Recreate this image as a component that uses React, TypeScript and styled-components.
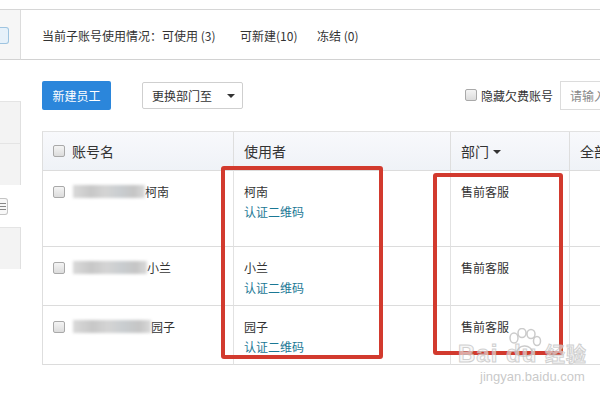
import React from "react";
import styled, { createGlobalStyle } from "styled-components";

const Global = createGlobalStyle`
  html, body { margin: 0; padding: 0; background: #fff; overflow: hidden; }
  body { font-family: "Noto Sans CJK SC", "Noto Sans", sans-serif; color: #333; font-size: 12px; }
`;

const Page = styled.div`
  width: 600px;
  height: 400px;
  padding-top: 9px;
  box-sizing: border-box;
  position: relative;
  overflow: hidden;
`;

const Frame = styled.div`
  display: grid;
  grid-template-columns: 21px minmax(0, 1fr);
  grid-template-rows: 50px auto;
  border-top: 1px solid #d6d6d6;
`;

const SideTop = styled.div`
  background: #f6f6f6;
  border-right: 1px solid #dcdcdc;
  border-bottom: 1px solid #d2d2d2;
  display: flex;
  align-items: center;
  padding-top: 1px;
`;

const TinyBtn = styled.div<{ $blue?: boolean }>`
  width: 8px;
  height: 15px;
  border: 1px solid ${(p) => (p.$blue ? "#9ec4e0" : "#bbb")};
  border-left: none;
  border-radius: 0 3px 3px 0;
  background: ${(p) => (p.$blue ? "#e6f1fa" : "#f4f4f4")};
`;

const Header = styled.div`
  border-bottom: 1px solid #d2d2d2;
  display: flex;
  align-items: center;
  padding-left: 21px;
  padding-top: 2px;
  white-space: nowrap;
`;

const Stat = styled.span<{ $w?: number }>`
  display: inline-block;
  width: ${(p) => (p.$w ? `${p.$w}px` : "auto")};
`;

const Side = styled.div`
  display: flex;
  flex-direction: column;
  padding-top: 41px;
`;

const SideItem = styled.div<{ $h: number; $white?: boolean }>`
  height: ${(p) => p.$h}px;
  background: ${(p) => (p.$white ? "#fff" : "#f3f3f3")};
  border-top: 1px solid ${(p) => (p.$white ? "#fff" : "#e4e4e4")};
  border-right: 1px solid ${(p) => (p.$white ? "#fff" : "#e0e0e0")};
  display: flex;
  align-items: center;
  box-sizing: border-box;
`;

const IconBtn = styled.div`
  width: 8px;
  height: 17px;
  border: 1px solid #c4c4c4;
  border-left: none;
  border-radius: 0 3px 3px 0;
  background: #f8f8f8;
  display: flex;
  flex-direction: column;
  justify-content: center;
  gap: 2px;
  padding-right: 1px;
  box-sizing: border-box;
  & > i {
    display: block;
    height: 1px;
    background: #888;
  }
`;

const Main = styled.div`
  padding-left: 21px;
  padding-top: 20px;
  min-width: 0;
`;

const Toolbar = styled.div`
  display: flex;
  align-items: center;
  height: 30px;
`;

const PrimaryBtn = styled.button`
  width: 69px;
  height: 29px;
  background: #2b86db;
  border: none;
  border-radius: 2px;
  color: #fff;
  font: inherit;
  font-size: 12px;
  padding: 0;
  flex: none;
`;

const Select = styled.div`
  margin-left: 31px;
  width: 101px;
  height: 27px;
  box-sizing: border-box;
  border: 1px solid #cfcfcf;
  border-radius: 2px;
  display: flex;
  align-items: center;
  padding-left: 9px;
  gap: 15px;
  flex: none;
`;

const Caret = styled.span<{ $ml?: number }>`
  width: 0;
  height: 0;
  border-left: 4px solid transparent;
  border-right: 4px solid transparent;
  border-top: 4px solid #333;
  margin-top: 2px;
  margin-left: ${(p) => p.$ml ?? 0}px;
`;

const Spacer = styled.div`
  flex: 1;
`;

const Check = styled.span`
  display: inline-block;
  width: 12px;
  height: 12px;
  box-sizing: border-box;
  border: 1px solid #a9a9a9;
  border-radius: 2px;
  background: linear-gradient(#f4f4f4, #dcdcdc);
  flex: none;
`;

const CheckLabel = styled.label`
  display: flex;
  align-items: center;
  gap: 4px;
  font-size: 12px;
  margin-right: 7px;
  flex: none;
`;

const Input = styled.div`
  width: 40px;
  height: 29px;
  box-sizing: border-box;
  border: 1px solid #dcdcdc;
  border-right: none;
  display: flex;
  align-items: center;
  padding-left: 9px;
  color: #888;
  white-space: nowrap;
  overflow: hidden;
  flex: none;
`;

const TableWrap = styled.div`
  position: relative;
  margin-top: 21px;
`;

const Table = styled.div`
  display: grid;
  grid-template-columns: 191px 217px 119px 60px;
  width: 620px;
  border-left: 1px solid #dedede;
  border-top: 1px solid #e2e2e2;
`;

const HeadCell = styled.div`
  height: 39px;
  box-sizing: border-box;
  background: linear-gradient(#f8f9fc, #eff2f7);
  border-right: 1px solid #dedede;
  border-bottom: 1px solid #dcdcdc;
  display: flex;
  align-items: center;
  padding-left: 10px;
  gap: 7px;
  font-size: 14px;
  color: #333;
  white-space: nowrap;
`;

const Cell = styled.div<{ $h: number }>`
  height: ${(p) => p.$h}px;
  box-sizing: border-box;
  border-right: 1px solid #e2e2e2;
  border-bottom: 1px solid #dcdcdc;
  padding: 11px 0 0 10px;
  line-height: 19px;
  font-size: 12px;
  white-space: nowrap;
`;

const NameLine = styled.div`
  display: flex;
  align-items: center;
  gap: 8px;
  height: 19px;
`;

const Blur = styled.span<{ $w: number }>`
  display: inline-block;
  width: ${(p) => p.$w}px;
  height: 13px;
  background: linear-gradient(90deg, #d9d9d9, #c7c7c7 25%, #d4d4d4 45%, #c9cdd0 65%, #c5c5c5 85%, #dadada);
  filter: blur(1.5px);
  margin-right: -8px;
`;

const Link = styled.div`
  color: #1b7895;
  margin-top: 1px;
`;

const RedBox = styled.div<{ $l: number; $t: number; $w: number; $h: number }>`
  position: absolute;
  left: ${(p) => p.$l}px;
  top: ${(p) => p.$t}px;
  width: ${(p) => p.$w}px;
  height: ${(p) => p.$h}px;
  box-sizing: border-box;
  border: 4px solid #d23a2e;
  border-radius: 3px;
  pointer-events: none;
`;

const Watermark = styled.div`
  position: absolute;
  left: 458px;
  top: 332px;
  color: rgba(205, 205, 205, 0.85);
  font-family: "Liberation Sans", sans-serif;
  line-height: 1;
  pointer-events: none;
`;

const WmBig = styled.div`
  font-size: 24px;
  font-weight: bold;
  letter-spacing: 1px;
  margin-top: 10px;
  -webkit-text-stroke: 1px rgba(190, 190, 190, 0.7);
  color: rgba(240, 240, 240, 0.6);
  & span { font-family: "Noto Sans CJK SC", sans-serif; font-size: 20px; }
`;

const WmSmall = styled.div`
  font-size: 13px;
  margin-top: 4px;
  margin-left: 22px;
  color: rgba(195, 195, 195, 0.9);
`;

const Paw = styled.svg`
  position: absolute;
  left: 48px;
  top: -4px;
`;

const rows = [
  { name: "柯南", blur: 72, h: 76 },
  { name: "小兰", blur: 74, h: 59 },
  { name: "园子", blur: 78, h: 59 },
];

export default function App() {
  return (
    <>
      <Global />
      <Page>
        <Frame>
          <SideTop>
            <TinyBtn $blue />
          </SideTop>
          <Header>
            <Stat $w={198}>当前子账号使用情况：可使用 (3)</Stat>
            <Stat $w={77}>可新建(10)</Stat>
            <Stat>冻结 (0)</Stat>
          </Header>
          <Side>
            <SideItem $h={42} />
            <SideItem $h={42} />
            <SideItem $h={42} $white>
              <IconBtn>
                <i />
                <i />
                <i />
              </IconBtn>
            </SideItem>
            <SideItem $h={42} />
          </Side>
          <Main>
            <Toolbar>
              <PrimaryBtn>新建员工</PrimaryBtn>
              <Select>
                <span>更换部门至</span>
                <Caret />
              </Select>
              <Spacer />
              <CheckLabel>
                <Check />
                隐藏欠费账号
              </CheckLabel>
              <Input>请输入</Input>
            </Toolbar>
            <TableWrap>
              <Table>
                <HeadCell>
                  <Check />
                  账号名
                </HeadCell>
                <HeadCell>使用者</HeadCell>
                <HeadCell>
                  部门
                  <Caret $ml={-3} />
                </HeadCell>
                <HeadCell>全部</HeadCell>
                {rows.map((r) => (
                  <React.Fragment key={r.name}>
                    <Cell $h={r.h}>
                      <NameLine>
                        <Check />
                        <Blur $w={r.blur} />
                        <span>{r.name}</span>
                      </NameLine>
                    </Cell>
                    <Cell $h={r.h}>
                      <div>{r.name}</div>
                      <Link>认证二维码</Link>
                    </Cell>
                    <Cell $h={r.h}>售前客服</Cell>
                    <Cell $h={r.h} />
                  </React.Fragment>
                ))}
              </Table>
              <RedBox $l={179} $t={35} $w={162} $h={193} />
              <RedBox $l={391} $t={42} $w={130} $h={182} />
            </TableWrap>
          </Main>
        </Frame>
        <Watermark>
          <Paw width="36" height="30" viewBox="0 0 36 30">
            <g fill="none" stroke="rgba(190,190,190,0.8)" strokeWidth="1.5">
              <ellipse cx="8" cy="10" rx="4" ry="5" />
              <ellipse cx="16" cy="5" rx="4" ry="4.5" />
              <ellipse cx="25" cy="6" rx="4" ry="4.5" />
              <ellipse cx="31" cy="13" rx="3.5" ry="4.5" />
              <path d="M10 26 C12 16 24 15 27 25 C24 29 14 29 10 26 Z" />
            </g>
          </Paw>
          <WmBig>
            Bai du <span>经验</span>
          </WmBig>
          <WmSmall>jingyan.baidu.com</WmSmall>
        </Watermark>
      </Page>
    </>
  );
}
